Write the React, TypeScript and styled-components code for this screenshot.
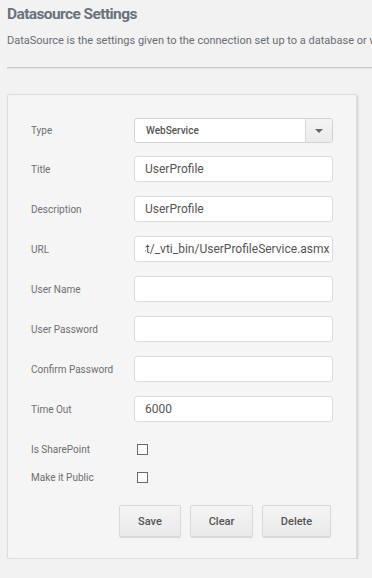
import React, { useEffect, useRef } from "react";
import styled, { createGlobalStyle } from "styled-components";

const GlobalStyle = createGlobalStyle`
  html, body {
    margin: 0;
    padding: 0;
    background: #f2f2f2;
    font-family: Roboto, "Liberation Sans", sans-serif;
    overflow: hidden;
  }
`;

const Page = styled.div`
  padding: 4px 0 0 7px;
`;

const Title = styled.h1`
  margin: 0;
  font-size: 15.5px;
  font-weight: 700;
  letter-spacing: -0.6px;
  line-height: 20px;
  color: #6b717d;
`;

const Intro = styled.p`
  margin: 10px 0 0;
  font-size: 11px;
  line-height: 14px;
  color: #6a6d72;
  white-space: nowrap;
`;

const Rule = styled.hr`
  margin: 19px 0 0;
  border: none;
  border-top: 1px solid #c9c9c9;
  border-bottom: 1px solid #e6e6e6;
`;

const Card = styled.form`
  margin-top: 25px;
  width: 350px;
  box-sizing: border-box;
  background: #f5f5f5;
  border: 1px solid #dedede;
  border-radius: 2px;
  box-shadow: 1px 1px 2px rgba(0, 0, 0, 0.15);
  padding: 23px 24px 21px 23px;
`;

const Row = styled.div<{ $gap?: number; $height?: number }>`
  display: grid;
  grid-template-columns: 103px 199px;
  align-items: center;
  min-height: ${(p) => p.$height ?? 26}px;
  margin-bottom: ${(p) => p.$gap ?? 14}px;
`;

const Label = styled.label`
  font-size: 10px;
  color: #6f6f6f;
`;

const Field = styled.input<{ $tight?: boolean }>`
  box-sizing: border-box;
  width: 199px;
  height: 26px;
  padding: 0 ${(p) => (p.$tight ? 2 : 10)}px 0 10px;
  border: 1px solid #dcdcdc;
  border-radius: 3px;
  background: #fff;
  font-family: Roboto, "Liberation Sans", sans-serif;
  font-size: 12px;
  color: #555;
  outline: none;
`;

const Select = styled.div`
  box-sizing: border-box;
  width: 199px;
  height: 25px;
  display: flex;
  border: 1px solid #d2d2d2;
  border-radius: 3px;
  background: #fff;
  overflow: hidden;
`;

const SelectValue = styled.div`
  flex: 1;
  display: flex;
  align-items: center;
  padding-left: 11px;
  font-size: 10px;
  font-weight: 500;
  color: #555;
`;

const SelectArrow = styled.div`
  width: 26px;
  display: flex;
  align-items: center;
  justify-content: center;
  background: linear-gradient(#f4f4f4, #ebebeb);
  border-left: 1px solid #d8d8d8;
  &::after {
    content: "";
    border-left: 4px solid transparent;
    border-right: 4px solid transparent;
    border-top: 4px solid #666;
  }
`;

const Check = styled.input`
  appearance: none;
  box-sizing: border-box;
  width: 11px;
  height: 11px;
  margin: 0 0 0 3px;
  border: 1px solid #6a6a6a;
  background: #fff;
`;

const Actions = styled.div`
  display: flex;
  justify-content: flex-end;
  gap: 9px;
  margin-top: 18px;
  padding-right: 1px;
`;

const Button = styled.button<{ $width: number }>`
  width: ${(p) => p.$width}px;
  height: 32px;
  border: 1px solid #d9d9d9;
  border-radius: 2px;
  background: linear-gradient(#f4f4f4, #eaeaea);
  box-shadow: 0 1px 1px rgba(0, 0, 0, 0.12);
  font-family: Roboto, "Liberation Sans", sans-serif;
  font-size: 11px;
  font-weight: 500;
  color: #555;
  cursor: pointer;
`;

const UrlField: React.FC<{ value: string }> = ({ value }) => {
  const ref = useRef<HTMLInputElement>(null);
  useEffect(() => {
    if (ref.current) ref.current.scrollLeft = ref.current.scrollWidth;
  }, []);
  return <Field ref={ref} $tight defaultValue={value} />;
};

const fields = [
  { label: "Title", value: "UserProfile" },
  { label: "Description", value: "UserProfile" },
  { label: "URL", value: "http://localhost/_vti_bin/UserProfileService.asmx", url: true },
  { label: "User Name", value: "" },
  { label: "User Password", value: "", type: "password" },
  { label: "Confirm Password", value: "", type: "password" },
  { label: "Time Out", value: "6000" },
];

const App: React.FC = () => {
  return (
    <>
      <GlobalStyle />
      <Page>
        <Title>Datasource Settings</Title>
        <Intro>
          DataSource is the settings given to the connection set up to a database or web service.
        </Intro>
        <Rule />
        <Card onSubmit={(e) => e.preventDefault()}>
          <Row $height={25} $gap={13}>
            <Label>Type</Label>
            <Select>
              <SelectValue>WebService</SelectValue>
              <SelectArrow />
            </Select>
          </Row>
          {fields.map((f, i) => (
            <Row key={f.label} $gap={i === fields.length - 1 ? 17 : 14}>
              <Label>{f.label}</Label>
              {f.url ? (
                <UrlField value={f.value} />
              ) : (
                <Field type={f.type || "text"} defaultValue={f.value} />
              )}
            </Row>
          ))}
          <Row $height={20} $gap={8}>
            <Label>Is SharePoint</Label>
            <Check type="checkbox" />
          </Row>
          <Row $height={20} $gap={0}>
            <Label>Make it Public</Label>
            <Check type="checkbox" />
          </Row>
          <Actions>
            <Button $width={62}>Save</Button>
            <Button $width={63}>Clear</Button>
            <Button $width={69}>Delete</Button>
          </Actions>
        </Card>
      </Page>
    </>
  );
};

export default App;
